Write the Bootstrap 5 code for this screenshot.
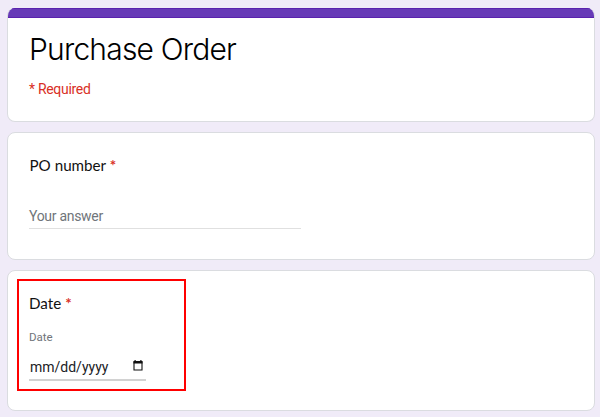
<!DOCTYPE html>
<html lang="en">
<head>
<meta charset="utf-8">
<meta name="viewport" content="width=device-width, initial-scale=1">
<title>Purchase Order</title>
<link href="https://cdn.jsdelivr.net/npm/bootstrap@5.3.0/dist/css/bootstrap.min.css" rel="stylesheet">
<style>
body{background:#f0ebf8;font-family:Roboto,sans-serif;color:#202124;overflow:hidden}
.form-page{padding:8px 5px 6px 7px;gap:10px}
.panel{border:1px solid #dadce0;border-radius:8px;padding-left:22px}
.panel-head{height:114px;border-top:0;overflow:hidden}
.panel-head::before{content:"";height:10px;margin-left:-23px;margin-right:-1px;background:#673ab7;border:solid #5a22ae;border-width:1px 0;flex:none}
.panel-po{height:128px;padding-top:21px}
.panel-date{height:141px;padding:8px 0 0 9px}
.form-title{font:300 30px/40px Inter,sans-serif;letter-spacing:-.8px;color:#000;margin:11px 0 0 -1px}
.required-note{font-size:14px;line-height:18px;letter-spacing:-.3px;color:#d93025;margin:11px 0 0 -1px}
.question{font:400 15.2px/22px Lato,sans-serif;color:#111}
.panel-po .question{margin-left:-.5px}
.star{color:#d93025;font-weight:700}
.answer{width:272px;height:23px;margin:30px 0 0 -1px;border-bottom:1px solid #e0e0e0;font-size:14px;line-height:20px;letter-spacing:-.3px;color:#70757a}
.marked{width:169px;height:112px;border:2px solid #f00;padding:11px 0 0 10px}
.hint{font-size:11.5px;line-height:16px;color:#70757a;margin-top:15px}
.date-field{width:117px;height:24px;margin-top:12px;border-bottom:2px solid #d2d2d2;font-size:14px;line-height:20px;padding-left:1px}
.date-field svg{margin:3px 3px 0 0}
</style>
<script src="https://cdn.jsdelivr.net/npm/bootstrap@5.3.0/dist/js/bootstrap.bundle.min.js"></script>
</head>
<body>
<main class="form-page d-flex flex-column">
  <section class="panel panel-head bg-white d-flex flex-column">
    <h1 class="form-title">Purchase Order</h1>
    <div class="required-note">* Required</div>
  </section>
  <section class="panel panel-po bg-white">
    <div class="question">PO number <span class="star">*</span></div>
    <div class="answer">Your answer</div>
  </section>
  <section class="panel panel-date bg-white">
    <div class="marked">
      <div class="question">Date <span class="star">*</span></div>
      <div class="hint">Date</div>
      <div class="date-field d-flex justify-content-between">
        <span>mm/dd/yyyy</span>
        <svg width="10" height="11" viewBox="0 0 10 11" aria-hidden="true"><path d="M1 2h8v8H1z" fill="none" stroke="#111" stroke-width="1.1"/><path d="M.5 1h9v2.6h-9zM1.5 0h1.2v1.5H1.5zM7.3 0h1.2v1.5H7.3z" fill="#111"/></svg>
      </div>
    </div>
  </section>
</main>
</body>
</html>
